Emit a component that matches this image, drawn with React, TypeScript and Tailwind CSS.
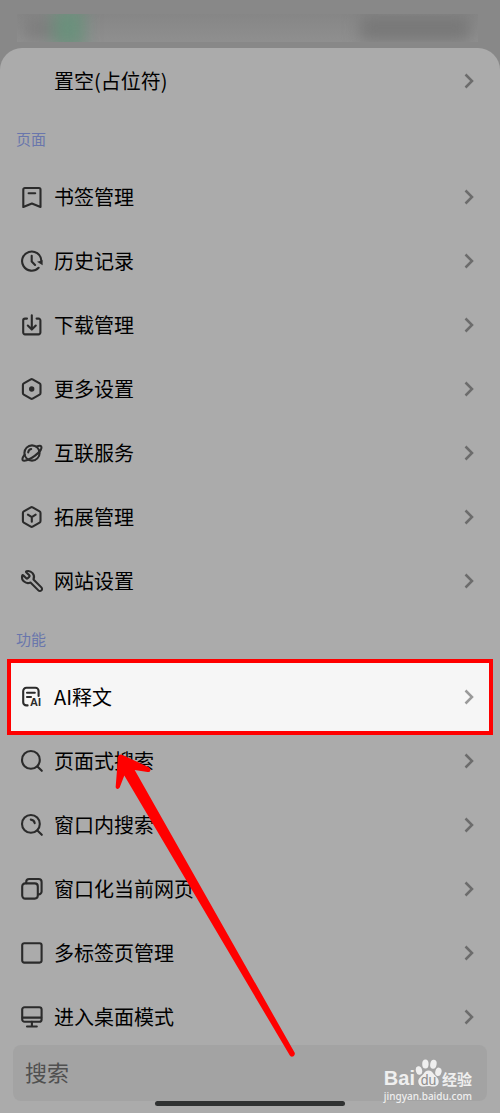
import React from 'react';
import { Wrench } from 'lucide-react';

// Shared wrapper for the line icons
const Icon: React.FC<{ children: React.ReactNode }> = ({ children }) => (
  <svg
    className="w-6 h-6 shrink-0 overflow-visible text-[#2b2b2b]"
    viewBox="0 0 24 24"
    fill="none"
    stroke="currentColor"
    strokeWidth="2.1"
    strokeLinecap="round"
    strokeLinejoin="round"
    aria-hidden="true"
  >
    {children}
  </svg>
);

const HEXAGON = 'M10.8 2.4a1.8 1.8 0 0 1 1.8 0l7 4a1.8 1.8 0 0 1 .9 1.6v8a1.8 1.8 0 0 1-.9 1.6l-7 4a1.8 1.8 0 0 1-1.8 0l-7-4a1.8 1.8 0 0 1-.9-1.6V8a1.8 1.8 0 0 1 .9-1.6z';

const icons: Record<string, React.ReactNode> = {
  bookmark: (
    <Icon>
      <path d="M3.3 4.6a1.6 1.6 0 0 1 1.6-1.6h14a1.6 1.6 0 0 1 1.6 1.6V22l-8.6-3.4L3.3 22z" />
      <path d="M8.6 8.3h6.6" />
    </Icon>
  ),
  history: (
    <Icon>
      <path d="M21.3 11.6A9.6 9.6 0 1 0 18.6 18.8" />
      <path d="M11.7 6.7v5.8l3.4 3.4" />
      <path d="M17 12.8l5.6-1.6v5z" fill="currentColor" stroke="none" />
    </Icon>
  ),
  download: (
    <Icon>
      <path d="M7 5.6H5a1.8 1.8 0 0 0-1.8 1.8v12.2A1.8 1.8 0 0 0 5 21.4h13.6a1.8 1.8 0 0 0 1.8-1.8V7.4a1.8 1.8 0 0 0-1.8-1.8h-2" />
      <path d="M11.8 2.2v14M7.8 12.6l4 4 4-4" />
    </Icon>
  ),
  more: (
    <Icon>
      <path d={HEXAGON} />
      <circle cx="11.7" cy="12" r="2.7" fill="currentColor" stroke="none" />
    </Icon>
  ),
  planet: (
    <Icon>
      <circle cx="12" cy="12" r="7.6" />
      <path d="M16.6 5.4c2.4-.8 4.2-.8 4.7.2 1 1.9-2.2 5.9-6.6 9.3s-10.8 6-12 4.2c-.7-1.2.2-3.2 2-5.4" />
      <path d="M8.2 11.4a4 4 0 0 1 3-3.4" />
    </Icon>
  ),
  cube: (
    <Icon>
      <path d={HEXAGON} />
      <path d="M7.9 9.7l3.9 2.5 3.9-2.5M11.8 12.2v4.6" />
    </Icon>
  ),
  wrench: <Wrench className="w-6 h-6 shrink-0 -scale-x-100 text-[#2b2b2b]" strokeWidth={2.1} aria-hidden="true" />,
  ai: (
    <Icon>
      <path d="M18.6 11V6a3.2 3.2 0 0 0-3.2-3.2H6.4A3.2 3.2 0 0 0 3.2 6v11.2a3.2 3.2 0 0 0 3.2 3.2h1.2" />
      <path d="M7 7.8h7.8M7 12h4" />
      <text
        x="10"
        y="21"
        fontSize="11"
        fontWeight="700"
        fill="currentColor"
        stroke="none"
        className="font-['Liberation_Sans',sans-serif]"
      >
        AI
      </text>
    </Icon>
  ),
  search: (
    <Icon>
      <circle cx="10.9" cy="10.9" r="8.9" />
      <path d="M17.4 17.4l4.4 4.4" />
    </Icon>
  ),
  searchWindow: (
    <Icon>
      <circle cx="10.9" cy="10.9" r="8.9" />
      <path d="M17.4 17.4l4.4 4.4M10.8 6.6a4.3 4.3 0 0 1 3.9 3.5" />
    </Icon>
  ),
  windows: (
    <Icon>
      <rect x="2.2" y="6.4" width="15.6" height="15.2" rx="3" />
      <path d="M6.2 6.2V5a3 3 0 0 1 3-3h9.4a3 3 0 0 1 3 3v9.4a3 3 0 0 1-3 3h-.6" />
    </Icon>
  ),
  square: (
    <Icon>
      <rect x="2.2" y="2.2" width="19.4" height="19.4" rx="2" />
    </Icon>
  ),
  desktop: (
    <Icon>
      <rect x="2.2" y="2.2" width="19.4" height="14.6" rx="2.4" />
      <path d="M2.6 12.6h18.6M11.9 16.8v4.2M7 21.5h9.8" />
    </Icon>
  ),
};

interface MenuItem {
  label: string;
  icon?: string;
  highlighted?: boolean;
}

const pageItems: MenuItem[] = [
  { label: '书签管理', icon: 'bookmark' },
  { label: '历史记录', icon: 'history' },
  { label: '下载管理', icon: 'download' },
  { label: '更多设置', icon: 'more' },
  { label: '互联服务', icon: 'planet' },
  { label: '拓展管理', icon: 'cube' },
  { label: '网站设置', icon: 'wrench' },
];

const featureItems: MenuItem[] = [
  { label: 'AI释文', icon: 'ai', highlighted: true },
  { label: '页面式搜索', icon: 'search' },
  { label: '窗口内搜索', icon: 'searchWindow' },
  { label: '窗口化当前网页', icon: 'windows' },
  { label: '多标签页管理', icon: 'square' },
  { label: '进入桌面模式', icon: 'desktop' },
];

const MenuRow: React.FC<MenuItem> = ({ label, icon, highlighted }) => (
  <li
    className={
      highlighted
        ? 'relative -my-1.5 mx-[7px] border-4 border-[#ff0000] bg-[#f6f6f6]'
        : ''
    }
  >
    <button
      type="button"
      className={`flex w-full items-center gap-2.5 text-left text-xl text-black ${
        highlighted ? 'h-[68px] px-[9px]' : 'h-16 px-5'
      }`}
    >
      {icon ? icons[icon] : <span className="w-6 shrink-0" />}
      <span className="flex-1">{label}</span>
      <svg
        className={`w-[22px] h-[22px] shrink-0 ${highlighted ? 'text-[#9a9a9a]' : 'text-[#6c6c6c]'}`}
        viewBox="0 0 22 22"
        fill="none"
        stroke="currentColor"
        strokeWidth="2.5"
        aria-hidden="true"
      >
        <path d="M7.5 4.5l6.5 6.5-6.5 6.5" />
      </svg>
    </button>
  </li>
);

const Section: React.FC<{ title: string; items: MenuItem[] }> = ({ title, items }) => (
  <section>
    <h2 className="flex h-[52px] items-center px-4 text-[15px] text-[#6976ac]">{title}</h2>
    <ul>
      {items.map((item) => (
        <MenuRow key={item.label} {...item} />
      ))}
    </ul>
  </section>
);

const Watermark = () => (
  <div className="absolute right-7 bottom-2.5 flex flex-col items-end font-['Liberation_Sans','Noto_Sans_CJK_SC',sans-serif] text-[#efefef]">
    <div className="flex items-end">
      <span className="text-xl leading-5 font-bold">Bai</span>
      <span className="relative">
        <svg className="w-[27px] h-[30px]" viewBox="0 0 27 30" fill="currentColor" aria-hidden="true">
          <ellipse cx="4" cy="12.5" rx="3.1" ry="4.3" transform="rotate(-14 4 12.5)" />
          <ellipse cx="10.4" cy="6" rx="3.2" ry="4.5" />
          <ellipse cx="18.4" cy="6.2" rx="3.2" ry="4.5" transform="rotate(10 18.4 6.2)" />
          <ellipse cx="23.4" cy="13.8" rx="3.1" ry="4.3" transform="rotate(14 23.4 13.8)" />
          <path d="M13.5 12.5c2.6 0 3.9 1.7 5.4 3.7 1.8 2.3 4.8 3.7 4.8 7.3 0 3.3-2.4 5.3-5.6 5.1-1.8-.1-3-.5-4.7-.5s-2.9.4-4.6.5c-3.2.2-5.5-1.9-5.5-5.1 0-3.6 3.1-5 4.9-7.3 1.5-2 2.7-3.7 5.3-3.7z" />
        </svg>
        <span className="absolute inset-x-0 bottom-0 text-center text-sm leading-4 text-[#8c8c8c]">du</span>
      </span>
      <span className="text-[15px] leading-4 font-bold">经验</span>
    </div>
    <a href="#jingyan" className="font-['Noto_Sans',sans-serif] text-[10px] leading-4 font-medium">
      jingyan.baidu.com
    </a>
  </div>
);

const App = () => {
  return (
    <div className="relative flex min-h-screen flex-col overflow-hidden bg-[#888888] font-['Noto_Sans_CJK_SC',sans-serif]">
      {/* Blurred status bar */}
      <header className="h-12 px-[22px] pt-3.5 pl-[17px]">
        <div className="flex h-7 items-center justify-between overflow-hidden bg-linear-to-b from-[#868686] to-[#8f8f8f]">
          <div className="flex items-center pl-2 blur-[8px]">
            <span className="h-5 w-7 bg-[#7c7c7c]" />
            <span className="h-10 w-8 bg-[#6b907c]" />
          </div>
          <div className="mr-2 h-6 w-[110px] bg-[#777777] blur-[8px]" />
        </div>
      </header>

      <main className="flex flex-1 flex-col rounded-t-[22px] bg-[#ababab] pt-px">
        <ul>
          <MenuRow label="置空(占位符)" />
        </ul>
        <Section title="页面" items={pageItems} />
        <Section title="功能" items={featureItems} />

        {/* Search bar and the home indicator */}
        <footer className="relative -mt-1 bg-[#ababab] px-[13px] pb-2">
          <input
            type="text"
            aria-label="搜索"
            placeholder="搜索"
            className="block h-14 w-full rounded-lg bg-[#a3a3a3] px-3 pb-1 text-[22px] text-black outline-none placeholder:text-[#505050]"
          />
          <div className="mx-auto h-[5px] w-[190px] rounded-full bg-[#303232]" />
        </footer>
      </main>

      {/* Pointer to the AI row */}
      <svg
        className="pointer-events-none absolute top-[753px] left-[115px] h-[305px] w-[182px]"
        viewBox="115 753 182 305"
        fill="#ff0000"
        aria-hidden="true"
      >
        <path d="M118 757.5Q118.3 753.5 122.5 755L148.8 767.2Q151.5 769 149.8 771.5Q149 772.3 147.5 772L134.7 770L294.7 1052.8Q295.3 1055 293.5 1056.3Q291 1057.5 289.7 1055.3L124.3 775.5L119.7 787.5Q118.5 789.5 116.8 788.8Q115.5 788 115.7 786.5Z" />
      </svg>

      <Watermark />
    </div>
  );
};

export default App;
